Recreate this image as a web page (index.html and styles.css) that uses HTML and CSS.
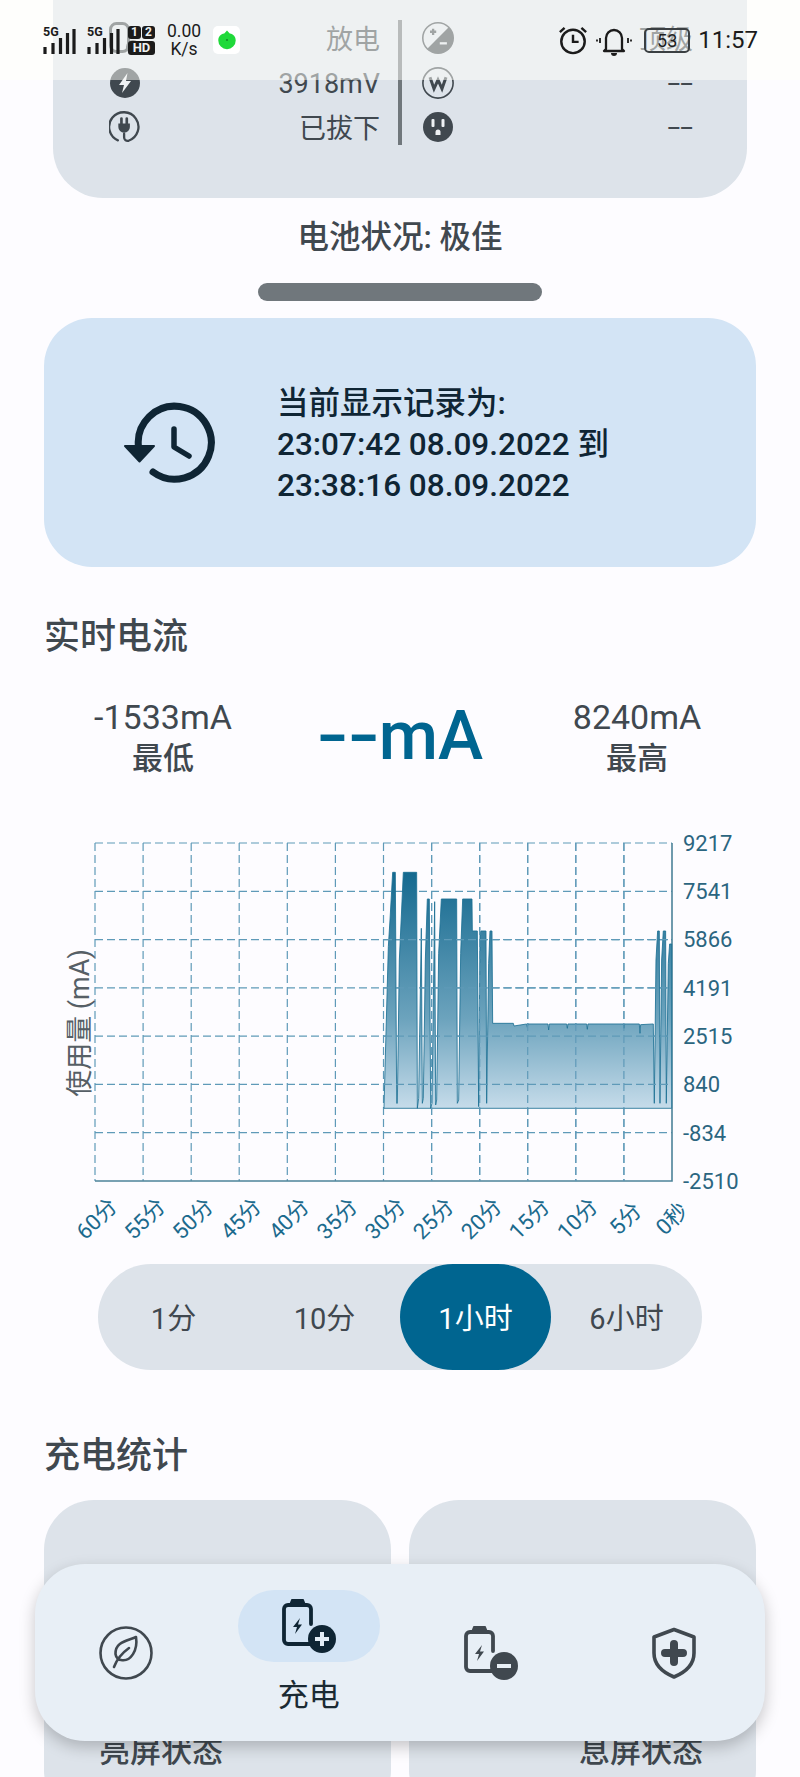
FILE: index.html
```html
<!DOCTYPE html>
<html lang="zh-CN">
<head>
    <meta charset="UTF-8">
    <meta name="viewport" content="width=device-width, initial-scale=1.0">
    <title>充电</title>
    <link rel="stylesheet" href="styles.css">
</head>
<body>
<div class="page">
    <!-- 电池信息 -->
    <div class="info-card">
        <div class="info-col">
            <div class="info-row">
                <svg class="info-icon" viewBox="0 0 32 32"><rect x="1.500" y="1.500" width="18" height="28" rx="6" fill="none" stroke="#40484f" stroke-width="3"/><circle cx="24" cy="25" r="7" fill="#40484f"/></svg>
                <span>放电</span>
            </div>
            <div class="info-row">
                <svg class="info-icon" viewBox="0 0 32 32"><circle cx="16" cy="16" r="15" fill="#40484f"/><path d="M18.500 6 10 18h5l-2 8 9-12h-5z" fill="#eef1f4"/></svg>
                <span class="latin">3918mV</span>
            </div>
            <div class="info-row">
                <svg class="info-icon" viewBox="0 0 36 36"><path d="M10 33A16.500 16.500 0 1 1 22 33.500c-3 .4-5-1-5-4v-4" fill="none" stroke="#40484f" stroke-width="2.600" stroke-linecap="round"/><path d="M10.500 14h13v4a6.500 6.500 0 0 1-13 0z" fill="#40484f"/><path d="M14 8.500v6M20 8.500v6" stroke="#40484f" stroke-width="3" stroke-linecap="round"/></svg>
                <span>已拔下</span>
            </div>
        </div>
        <div class="info-divider"></div>
        <div class="info-col">
            <div class="info-row">
                <svg class="info-icon" viewBox="0 0 36 36"><circle cx="18" cy="18" r="18" fill="#40484f"/><path d="M29.500 6.500 6.500 29.500A16 16 0 0 1 29.500 6.500z" fill="#dde3ea"/><path d="M9 11h7M12.500 7.500v7" stroke="#40484f" stroke-width="2.600"/><path d="M20 24h8" stroke="#dde3ea" stroke-width="2.600"/></svg>
                <span>顶级</span>
            </div>
            <div class="info-row">
                <svg class="info-icon" viewBox="0 0 36 36"><circle cx="18" cy="18" r="17" fill="none" stroke="#40484f" stroke-width="1.800"/><path d="M9 11.500l4.500 13 4.500-10 4.500 10 4.500-13" fill="none" stroke="#40484f" stroke-width="3.400"/></svg>
                <span class="dash">--</span>
            </div>
            <div class="info-row">
                <svg class="info-icon" viewBox="0 0 32 32"><circle cx="16" cy="16" r="15" fill="#40484f"/><rect x="9.500" y="8" width="3" height="8" rx="1" fill="#eef1f4"/><rect x="19.500" y="8" width="3" height="8" rx="1" fill="#eef1f4"/><path d="M13.500 24v-3a2.500 2.500 0 0 1 5 0v3z" fill="#eef1f4"/></svg>
                <span class="dash">--</span>
            </div>
        </div>
    </div>
    <div class="battery-state">电池状况: 极佳</div>
    <div class="handle"></div>

    <!-- 记录时间 -->
    <div class="record-card">
        <svg class="record-icon" viewBox="120 400 96 84">
            <path d="M151 470A36.500 36.500 0 1 0 136.500 445" fill="none" stroke="#0f2534" stroke-width="7" stroke-linecap="round"/>
            <path d="M123 444h29l-14.500 15.500z" fill="#0f2534" stroke="#0f2534" stroke-width="2" stroke-linejoin="round"/>
            <path d="M172 427v18l15 9" fill="none" stroke="#0f2534" stroke-width="5.500" stroke-linecap="round" stroke-linejoin="round"/>
        </svg>
        <div class="record-text">
            <div>当前显示记录为:</div>
            <div>23:07:42 08.09.2022 到</div>
            <div>23:38:16 08.09.2022</div>
        </div>
    </div>

    <h2 class="section-title title-current">实时电流</h2>
    <div class="current-row">
        <div class="current-side">
            <div class="current-value">-1533mA</div>
            <div class="current-label">最低</div>
        </div>
        <div class="current-main"><span class="main-dash">--</span>mA</div>
        <div class="current-side">
            <div class="current-value">8240mA</div>
            <div class="current-label">最高</div>
        </div>
    </div>

    <!-- 图表 -->
    <svg class="chart" viewBox="0 820 800 430">
        <defs>
            <linearGradient id="areaFill" x1="0" y1="0" x2="0" y2="1">
                <stop offset="0" stop-color="#14698f"/>
                <stop offset=".62" stop-color="#6ca3bd"/>
                <stop offset="1" stop-color="#c6dcea"/>
            </linearGradient>
        </defs>
        <path class="grid" d="M95 843H672M95 891.300H672M95 939.600H672M95 987.900H672M95 1036.100H672M95 1084.400H672M95 1132.700H672"/>
        <path class="grid" d="M95 843V1181M143.100 843V1181M191.200 843V1181M239.200 843V1181M287.300 843V1181M335.400 843V1181M383.500 843V1181M431.600 843V1181M479.700 843V1181M527.700 843V1181M575.800 843V1181M623.900 843V1181"/>
        <path class="axis" d="M95 1181H672V843"/>
        <polygon class="area" transform="translate(370 820) scale(.3333)" points="42,865 45,750 55,380 60,300 68,157 76,157 80,850 82,850 88,420 100,157 140,157 142,865 146,835 154,325 157,850 160,835 166,420 172,237 178,237 182,865 186,850 194,245 197,855 200,840 206,400 214,237 260,237 262,850 266,840 272,400 278,237 306,237 307,333 322,333 326,860 330,340 333,333 348,333 350,850 356,430 360,333 366,333 368,610 430,610 432,618 470,612 472,622 474,612 534,612 536,630 538,612 590,612 592,625 594,612 650,612 652,628 654,612 760,612 762,625 764,612 808,612 810,640 812,614 850,612 853,850 858,420 863,333 868,333 870,850 875,420 880,333 887,333 889,850 895,430 899,372 905,372 905,865"/>
        <path class="grid" d="M384 939.600H672M384 987.900H672M384 1036.100H672M384 1084.400H672M431.600 843V1181M479.700 843V1181M527.700 843V1181M575.800 843V1181M623.900 843V1181"/>
        <text class="axis-title" transform="rotate(-90 82 1023)" x="82" y="1023">使用量 (mA)</text>
        <g class="y-labels">
            <text x="683" y="845">9217</text>
            <text x="683" y="893.300">7541</text>
            <text x="683" y="941.600">5866</text>
            <text x="683" y="989.900">4191</text>
            <text x="683" y="1038.100">2515</text>
            <text x="683" y="1086.400">840</text>
            <text x="683" y="1134.700">-834</text>
            <text x="683" y="1183">-2510</text>
        </g>
        <g class="x-labels">
            <text transform="rotate(-45 98 1220)" x="98" y="1220">60分</text>
            <text transform="rotate(-45 146.100 1220)" x="146.100" y="1220">55分</text>
            <text transform="rotate(-45 194.200 1220)" x="194.200" y="1220">50分</text>
            <text transform="rotate(-45 242.200 1220)" x="242.200" y="1220">45分</text>
            <text transform="rotate(-45 290.300 1220)" x="290.300" y="1220">40分</text>
            <text transform="rotate(-45 338.400 1220)" x="338.400" y="1220">35分</text>
            <text transform="rotate(-45 386.500 1220)" x="386.500" y="1220">30分</text>
            <text transform="rotate(-45 434.600 1220)" x="434.600" y="1220">25分</text>
            <text transform="rotate(-45 482.700 1220)" x="482.700" y="1220">20分</text>
            <text transform="rotate(-45 530.700 1220)" x="530.700" y="1220">15分</text>
            <text transform="rotate(-45 578.800 1220)" x="578.800" y="1220">10分</text>
            <text transform="rotate(-45 626.900 1220)" x="626.900" y="1220">5分</text>
            <text transform="rotate(-45 673 1220)" x="673" y="1220">0秒</text>
        </g>
    </svg>

    <div class="range">
        <div class="range-item">1分</div>
        <div class="range-item">10分</div>
        <div class="range-item active">1小时</div>
        <div class="range-item">6小时</div>
    </div>

    <h2 class="section-title title-stats">充电统计</h2>
    <div class="stat-cards">
        <div class="stat-card"><span class="stat-name">亮屏状态</span></div>
        <div class="stat-card right"><span class="stat-name">息屏状态</span></div>
    </div>

    <!-- 状态栏 -->
    <div class="status-bar">
        <div class="status-left">
            <div class="signal">
                <span class="signal-tag">5G</span>
                <svg viewBox="0 0 33 30" width="33" height="30"><path d="M2 29v-7M10 29V18M17.500 29V13M24.500 29V8M31 29V4" stroke="#1b1b1b" stroke-width="3.200"/></svg>
            </div>
            <div class="signal">
                <span class="signal-tag">5G</span>
                <svg viewBox="0 0 33 30" width="33" height="30"><path d="M2 29v-7M10 29V18M17.500 29V13M24.500 29V8M31 29V4" stroke="#1b1b1b" stroke-width="3.200"/></svg>
            </div>
            <div class="sim">
                <span class="sim-num">1</span><span class="sim-num">2</span>
                <span class="sim-hd">HD</span>
            </div>
            <div class="speed"><span>0.00</span><span>K/s</span></div>
            <div class="app-badge"><svg viewBox="0 0 24 24" width="22" height="22"><path d="M12 1.500 15 5c4 .6 6.500 3.500 6.500 7.500a9.500 9.500 0 0 1-19 0C2.500 8.500 5 5.600 9 5z" fill="#20d93a"/><circle cx="12" cy="12" r="1.200" fill="#128a2a"/></svg></div>
        </div>
        <div class="status-right">
            <svg viewBox="0 0 32 32" width="30" height="30"><circle cx="16" cy="17.500" r="12.500" fill="none" stroke="#1b1b1b" stroke-width="2.600"/><path d="M16 10.500v7.500h6" fill="none" stroke="#1b1b1b" stroke-width="2.600"/><path d="M2 7.500 7 3M30 7.500 25 3" stroke="#1b1b1b" stroke-width="2.600"/></svg>
            <svg class="bell" viewBox="0 0 36 32" width="36" height="32"><path d="M10 25V14a8 8 0 0 1 16 0v11l2 2H8z" fill="none" stroke="#1b1b1b" stroke-width="2.300" stroke-linejoin="round"/><path d="M15 29a3 3 0 0 0 6 0z" fill="#1b1b1b"/><path d="M4 14v5M1 15.500v2M32 14v5M35 15.500v2" stroke="#1b1b1b" stroke-width="1.800"/></svg>
            <div class="battery"><span>53</span></div>
            <span class="clock">11:57</span>
        </div>
    </div>

    <!-- 底部导航 -->
    <nav class="bottom-nav">
        <div class="nav-item">
            <svg viewBox="0 0 54 54" width="54" height="54"><circle cx="27" cy="27" r="25.500" fill="none" stroke="#40484f" stroke-width="2.600"/><path d="M37 11C28 15 16 16 16.500 28 17 32 20 34 22 34 32 36 39 24 37 11z" fill="none" stroke="#40484f" stroke-width="2.600" stroke-linejoin="round"/><path d="M15 41C18 33 23 27 30 22" fill="none" stroke="#40484f" stroke-width="2.600" stroke-linecap="round"/></svg>
        </div>
        <div class="nav-item current">
            <div class="nav-pill">
                <svg viewBox="0 0 54 54" width="54" height="54"><path d="M30 45H6a4 4 0 0 1-4-4V10a4 4 0 0 1 4-4h19a4 4 0 0 1 4 4v15" fill="none" stroke="#0f2534" stroke-width="3.800" stroke-linecap="round"/><path d="M7 6l2-5a1 1 0 0 1 1-1h11a1 1 0 0 1 1 1l2 5z" fill="#0f2534"/><path d="M18 19l-7 9h4l-2 7 7-9.500h-4z" fill="#0f2534"/><circle cx="40" cy="40" r="14" fill="#0f2534"/><path d="M40 33v14M33 40h14" stroke="#e3edf6" stroke-width="4"/></svg>
            </div>
            <span class="nav-label">充电</span>
        </div>
        <div class="nav-item">
            <svg viewBox="0 0 54 54" width="54" height="54"><path d="M30 45H6a4 4 0 0 1-4-4V10a4 4 0 0 1 4-4h19a4 4 0 0 1 4 4v15" fill="none" stroke="#40484f" stroke-width="3.800" stroke-linecap="round"/><path d="M7 6l2-5a1 1 0 0 1 1-1h11a1 1 0 0 1 1 1l2 5z" fill="#40484f"/><path d="M18 19l-7 9h4l-2 7 7-9.500h-4z" fill="#40484f"/><circle cx="40" cy="40" r="14" fill="#40484f"/><path d="M33 40h14" stroke="#e8eff6" stroke-width="4"/></svg>
        </div>
        <div class="nav-item">
            <svg viewBox="0 0 54 54" width="54" height="54"><path d="M27 3.500 47 11v16c0 11-8 19-20 24C15 46 7 38 7 27V11z" fill="none" stroke="#40484f" stroke-width="3.600" stroke-linejoin="round"/><path d="M27 18v18M18 27h18" stroke="#40484f" stroke-width="8" stroke-linecap="round"/></svg>
        </div>
    </nav>
</div>
</body>
</html>
```

FILE: styles.css
```css
* {
    box-sizing: border-box;
}
body {
    margin: 0;
    font-family: Roboto, "Noto Sans CJK SC", sans-serif;
    color: #40484f;
    background-color: #fdfcff;
}
.page {
    position: relative;
    width: 800px;
    height: 1777px;
    overflow: hidden;
    background-color: #fdfcff;
}

/* 电池信息 */
.info-card {
    display: grid;
    grid-template-columns: 1fr 4px 1fr;
    height: 198px;
    margin: 0 53px;
    padding-top: 16px;
    border-radius: 0 0 50px 50px;
    background-color: #dde3ea;
}
.info-row {
    display: flex;
    align-items: center;
    justify-content: space-between;
    height: 44.5px;
    font-size: 27px;
}
.info-row span {
    margin-bottom: 2px;
}
.info-col:first-child .info-row {
    padding: 0 18px 0 56px;
}
.info-col:last-child .info-row {
    padding: 0 54px 0 20px;
}
.info-icon {
    width: 32px;
    height: 32px;
}
.info-row .latin {
    margin-bottom: -2px;
}
.info-row .dash {
    margin-bottom: 0;
    transform: scaleX(1.7);
    transform-origin: right;
}
.info-divider {
    height: 125px;
    margin-top: 4px;
    background-color: #70777c;
}
.battery-state {
    height: 78px;
    line-height: 80px;
    text-align: center;
    font-size: 31.500px;
    font-weight: 500;
}
.handle {
    width: 284px;
    height: 18px;
    margin: 7px auto 0;
    border-radius: 9px;
    background-color: #70777c;
}

/* 记录时间 */
.record-card {
    display: flex;
    align-items: center;
    height: 249px;
    margin: 17px 44px 0;
    border-radius: 48px;
    background-color: #d3e4f5;
}
.record-icon {
    width: 96px;
    height: 84px;
    margin: 2px 0 0 78px;
}
.record-text {
    margin: 4px 0 0 59px;
    font-size: 31.500px;
    font-weight: 500;
    line-height: 41px;
    color: #0f2534;
}

.section-title {
    margin: 0 44px;
    font-size: 36px;
    font-weight: 500;
    line-height: 40px;
}
.title-current {
    margin-top: 50px;
}
.current-row {
    display: grid;
    grid-template-columns: 236px 1fr 236px;
    align-items: center;
    height: 88px;
    margin: 35px 45px 0;
    text-align: center;
}
.current-value {
    font-size: 34px;
    line-height: 45px;
}
.current-label {
    font-size: 31px;
    font-weight: 500;
    line-height: 38px;
}
.current-main {
    font-size: 68px;
    font-weight: 500;
    color: #006590;
}
.main-dash {
    display: inline-block;
    width: 62px;
    text-align: left;
    transform: scaleX(1.35);
    transform-origin: left;
}

/* 图表 */
.chart {
    display: block;
    width: 800px;
    height: 430px;
    margin-top: 40px;
    font-size: 22px;
}
.grid {
    fill: none;
    stroke: #5f9ab8;
    stroke-width: 1.200;
    stroke-dasharray: 8 4;
}
.axis {
    fill: none;
    stroke: #4c8299;
    stroke-width: 1.600;
}
.area {
    fill: url(#areaFill);
    stroke: #1a6f93;
    stroke-width: 2.500;
}
.axis-title {
    font-size: 27px;
    text-anchor: middle;
    dominant-baseline: middle;
    fill: #565f66;
}
.y-labels text {
    fill: #2b6580;
    dominant-baseline: middle;
}
.x-labels text {
    fill: #1b6a8d;
    text-anchor: middle;
    dominant-baseline: middle;
}

.range {
    display: grid;
    grid-template-columns: repeat(4, 1fr);
    height: 106px;
    margin: 14px 98px 0;
    border-radius: 53px;
    background-color: #dde3ea;
}
.range-item {
    display: flex;
    align-items: center;
    justify-content: center;
    padding-bottom: 2px;
    border-radius: 53px;
    font-size: 29px;
}
.range-item.active {
    background-color: #006590;
    color: #fff;
}

.title-stats {
    margin-top: 66px;
}
.stat-cards {
    display: grid;
    grid-template-columns: 1fr 1fr;
    gap: 18px;
    height: 320px;
    margin: 24px 44px 0;
}
.stat-card {
    padding: 232px 0 0 55px;
    border-radius: 50px;
    background-color: #dde3ea;
}
.stat-card.right {
    padding-left: 170px;
}
.stat-name {
    font-size: 31px;
    font-weight: 500;
    line-height: 40px;
}

/* 状态栏 */
.status-bar {
    position: absolute;
    top: 0;
    left: 0;
    display: flex;
    align-items: center;
    justify-content: space-between;
    width: 800px;
    height: 80px;
    padding: 0 42px 0 43px;
    color: #1b1b1b;
    background-color: rgba(255, 255, 250, 0.5);
}
.status-left,
.status-right {
    display: flex;
    align-items: center;
}
.signal {
    position: relative;
    width: 33px;
    height: 30px;
    margin-right: 11px;
}
.signal svg {
    display: block;
}
.signal-tag {
    position: absolute;
    top: 1px;
    left: 0;
    font-size: 12.500px;
    font-weight: 700;
    line-height: 11px;
}
.sim {
    display: grid;
    grid-template-columns: 13px 13px;
    gap: 2px 1px;
    width: 27px;
    margin-left: -3px;
    text-align: center;
}
.sim-num {
    height: 13px;
    border-radius: 3px;
    font-size: 12px;
    font-weight: 700;
    line-height: 13px;
    color: #eef1f1;
    background-color: #1b1b1b;
}
.sim-hd {
    grid-column: span 2;
    height: 14px;
    border-radius: 3px;
    font-size: 13px;
    font-weight: 700;
    line-height: 14px;
    color: #eef1f1;
    background-color: #1b1b1b;
}
.speed {
    display: flex;
    flex-direction: column;
    align-items: center;
    width: 36px;
    margin-left: 11px;
    font-size: 17.500px;
    line-height: 18px;
}
.app-badge {
    display: flex;
    align-items: center;
    justify-content: center;
    width: 27px;
    height: 28px;
    margin-left: 11px;
    border-radius: 5px;
    background-color: #fff;
}
.bell {
    margin-left: 8px;
}
.battery {
    width: 46px;
    height: 25px;
    margin-left: 12px;
    border: 2px solid #3a3f42;
    border-radius: 5px;
    font-size: 18px;
    line-height: 21px;
    text-align: center;
}
.clock {
    margin-left: 8px;
    font-size: 24px;
}

/* 底部导航 */
.bottom-nav {
    position: absolute;
    top: 1564px;
    left: 35px;
    display: grid;
    grid-template-columns: repeat(4, 1fr);
    width: 730px;
    height: 177px;
    border-radius: 50px;
    background-color: #e8eff6;
    box-shadow: 0 6px 16px rgba(0, 0, 0, 0.22);
}
.nav-item {
    display: flex;
    flex-direction: column;
    align-items: center;
    justify-content: center;
}
.nav-item.current {
    justify-content: flex-start;
    padding-top: 26px;
}
.nav-pill {
    display: flex;
    align-items: center;
    justify-content: center;
    width: 142px;
    height: 72px;
    border-radius: 36px;
    background-color: #d3e4f5;
}
.nav-label {
    margin-top: 14px;
    font-size: 31px;
    line-height: 40px;
    color: #1b2a33;
}
```
